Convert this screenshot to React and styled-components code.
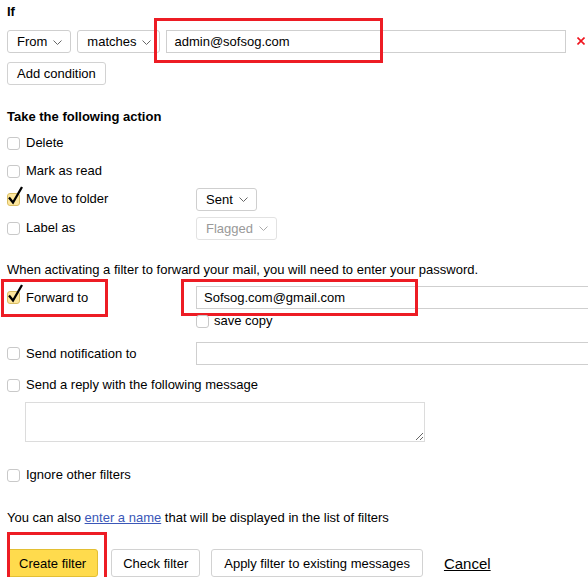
import React from 'react'
import styled, { createGlobalStyle } from 'styled-components'

const GlobalStyle = createGlobalStyle`
    html, body {
        margin: 0;
        padding: 0;
        background: #fff;
        overflow: hidden;
    }
    body {
        font-family: "Liberation Sans", Arial, sans-serif;
        font-size: 13px;
        color: #000;
    }
`

const Chevron = ({ color = '#666' }) => (
    <svg width='9' height='5' viewBox='0 0 9 5'>
        <path d='M0.5 0.5 L4.5 4.5 L8.5 0.5' fill='none' stroke={color} strokeWidth='1' />
    </svg>
)

const Select = ({ label, disabled }) => (
    <SelectBox $disabled={disabled}>
        <span>{label}</span>
        <Chevron color={disabled ? '#aaa' : '#666'} />
    </SelectBox>
)

const Check = ({ checked, children }) => (
    <CheckLabel>
        <Box $checked={checked}>
            {checked &&
                <svg className='tick' width='17' height='19' viewBox='0 0 17 19'>
                    <path d='M2 11.5 L6 16.5 L15 1' fill='none' stroke='#000' strokeWidth='2.3' strokeLinejoin='miter' />
                </svg>
            }
        </Box>
        <span>{children}</span>
    </CheckLabel>
)

export default function App() {
    return (
        <>
            <GlobalStyle />
            <Page>
                <Heading>If</Heading>
                <ConditionRow>
                    <Select label='From' />
                    <Select label='matches' />
                    <Marked>
                        <TextInput $width={400}>admin@sofsog.com</TextInput>
                        <Highlight $left={-12} $top={-12} $width={229} $height={45} />
                    </Marked>
                    <Remove>
                        <svg width='8' height='8' viewBox='0 0 8 8'>
                            <path d='M0.5 0.5 L7.5 7.5 M7.5 0.5 L0.5 7.5' stroke='#f0141e' strokeWidth='1.6' />
                        </svg>
                    </Remove>
                </ConditionRow>
                <Button $mt={9} $h={23} $px={9}>Add condition</Button>

                <Heading $mt={24}>Take the following action</Heading>
                <ActionList>
                    <ActionRow>
                        <Check>Delete</Check>
                    </ActionRow>
                    <ActionRow>
                        <Check>Mark as read</Check>
                    </ActionRow>
                    <ActionRow>
                        <Check checked>Move to folder</Check>
                        <Select label='Sent' />
                    </ActionRow>
                    <ActionRow $mt={1}>
                        <Check>Label as</Check>
                        <Select label='Flagged' disabled />
                    </ActionRow>
                </ActionList>

                <Note $mt={20}>When activating a filter to forward your mail, you will need to enter your password.</Note>

                <FieldRow $mt={8}>
                    <Marked>
                        <Check checked>Forward to</Check>
                        <Highlight $left={-6} $top={-11} $width={107} $height={38} />
                    </Marked>
                    <Marked>
                        <TextInput $width={420}>Sofsog.com@gmail.com</TextInput>
                        <Highlight $left={-15} $top={-7} $width={237} $height={37} />
                    </Marked>
                </FieldRow>
                <SubRow>
                    <Check>save copy</Check>
                </SubRow>

                <FieldRow $mt={14}>
                    <Check>Send notification to</Check>
                    <TextInput $width={420} />
                </FieldRow>

                <PlainRow $mt={12}>
                    <Check>Send a reply with the following message</Check>
                </PlainRow>
                <Message />

                <PlainRow $mt={25}>
                    <Check>Ignore other filters</Check>
                </PlainRow>

                <Note $mt={27}>
                    You can also <a href='#name'>enter a name</a> that will be displayed in the list of filters
                </Note>

                <Buttons>
                    <Marked>
                        <Button $primary $h={28} $px={11}>Create filter</Button>
                        <Highlight $left={0} $top={-17} $width={100} $height={54} />
                    </Marked>
                    <Button $h={28} $px={11}>Check filter</Button>
                    <Button $h={28} $px={12}>Apply filter to existing messages</Button>
                    <CancelLink href='#cancel'>Cancel</CancelLink>
                </Buttons>
            </Page>
        </>
    )
}

const Page = styled.div`
    display: flex;
    flex-direction: column;
    align-items: flex-start;
    padding: 4px 0 0 7px;
    width: 600px;
`

const Heading = styled.div`
    font-weight: bold;
    line-height: 16px;
    margin-top: ${p => p.$mt || 0}px;
`

const ConditionRow = styled.div`
    display: flex;
    align-items: center;
    gap: 6px;
    margin-top: 10px;
`

const SelectBox = styled.div`
    box-sizing: border-box;
    height: 23px;
    display: flex;
    align-items: center;
    gap: 6px;
    padding: 0 8px 0 9px;
    border: 1px solid ${p => p.$disabled ? '#e2e2e2' : '#cfcfcf'};
    border-radius: 3px;
    color: ${p => p.$disabled ? '#999' : '#000'};
    background: #fff;

    & svg {
        margin-top: 1px;
    }
`

const TextInput = styled.div`
    box-sizing: border-box;
    width: ${p => p.$width}px;
    height: 23px;
    padding: 0 7px;
    display: flex;
    align-items: center;
    border: 1px solid #cfcfcf;
    background: #fff;
    white-space: nowrap;
`

const Marked = styled.div`
    position: relative;
    display: flex;
`

const Highlight = styled.div`
    position: absolute;
    left: ${p => p.$left}px;
    top: ${p => p.$top}px;
    width: ${p => p.$width}px;
    height: ${p => p.$height}px;
    box-sizing: border-box;
    border: 3px solid #ed1c24;
    pointer-events: none;
`

const Remove = styled.div`
    display: flex;
    margin-left: 5px;
    margin-top: -2px;
`

const Button = styled.button`
    box-sizing: border-box;
    height: ${p => p.$h}px;
    margin-top: ${p => p.$mt || 0}px;
    padding: 0 ${p => p.$px}px;
    font: inherit;
    color: #000;
    background: ${p => p.$primary ? '#ffdb4d' : '#fff'};
    border: 1px solid ${p => p.$primary ? '#e3bf33' : '#d2d2d2'};
    border-radius: 3px;
    white-space: nowrap;
`

const ActionList = styled.div`
    display: flex;
    flex-direction: column;
    margin-top: 4px;
`

const ActionRow = styled.div`
    display: grid;
    grid-template-columns: 189px auto;
    align-items: center;
    justify-items: start;
    height: 28px;
    margin-top: ${p => p.$mt || 0}px;
`

const CheckLabel = styled.label`
    display: flex;
    align-items: center;
    gap: 6px;
    line-height: 16px;
    white-space: nowrap;
`

const Box = styled.span`
    position: relative;
    box-sizing: border-box;
    width: 13px;
    height: 13px;
    flex: none;
    border: 1px solid ${p => p.$checked ? '#d9bd63' : '#c9c9c9'};
    border-radius: 3px;
    background: ${p => p.$checked ? '#fde69c' : '#fff'};

    & .tick {
        position: absolute;
        left: -1px;
        top: -8px;
    }
`

const Note = styled.div`
    line-height: 16px;
    margin-top: ${p => p.$mt || 0}px;
    white-space: nowrap;

    & a {
        color: #3b57b8;
    }
`

const FieldRow = styled.div`
    display: grid;
    grid-template-columns: 189px auto;
    align-items: center;
    justify-items: start;
    height: 23px;
    margin-top: ${p => p.$mt || 0}px;
`

const SubRow = styled.div`
    margin: 5px 0 0 189px;
    height: 14px;
    display: flex;
    align-items: center;

    & label {
        gap: 5px;
    }
`

const PlainRow = styled.div`
    display: flex;
    align-items: center;
    height: 16px;
    margin-top: ${p => p.$mt || 0}px;
`

const Message = styled.textarea`
    box-sizing: border-box;
    width: 400px;
    height: 40px;
    margin: 9px 0 0 18px;
    border: 1px solid #dcdcdc;
    font: inherit;
    resize: both;
`

const Buttons = styled.div`
    display: flex;
    align-items: center;
    gap: 11px;
    margin-top: 23px;

    & > :first-child {
        margin-right: 2px;
    }
`

const CancelLink = styled.a`
    margin-left: 10px;
    font-size: 15px;
    color: #000;
    text-decoration: underline;
`
